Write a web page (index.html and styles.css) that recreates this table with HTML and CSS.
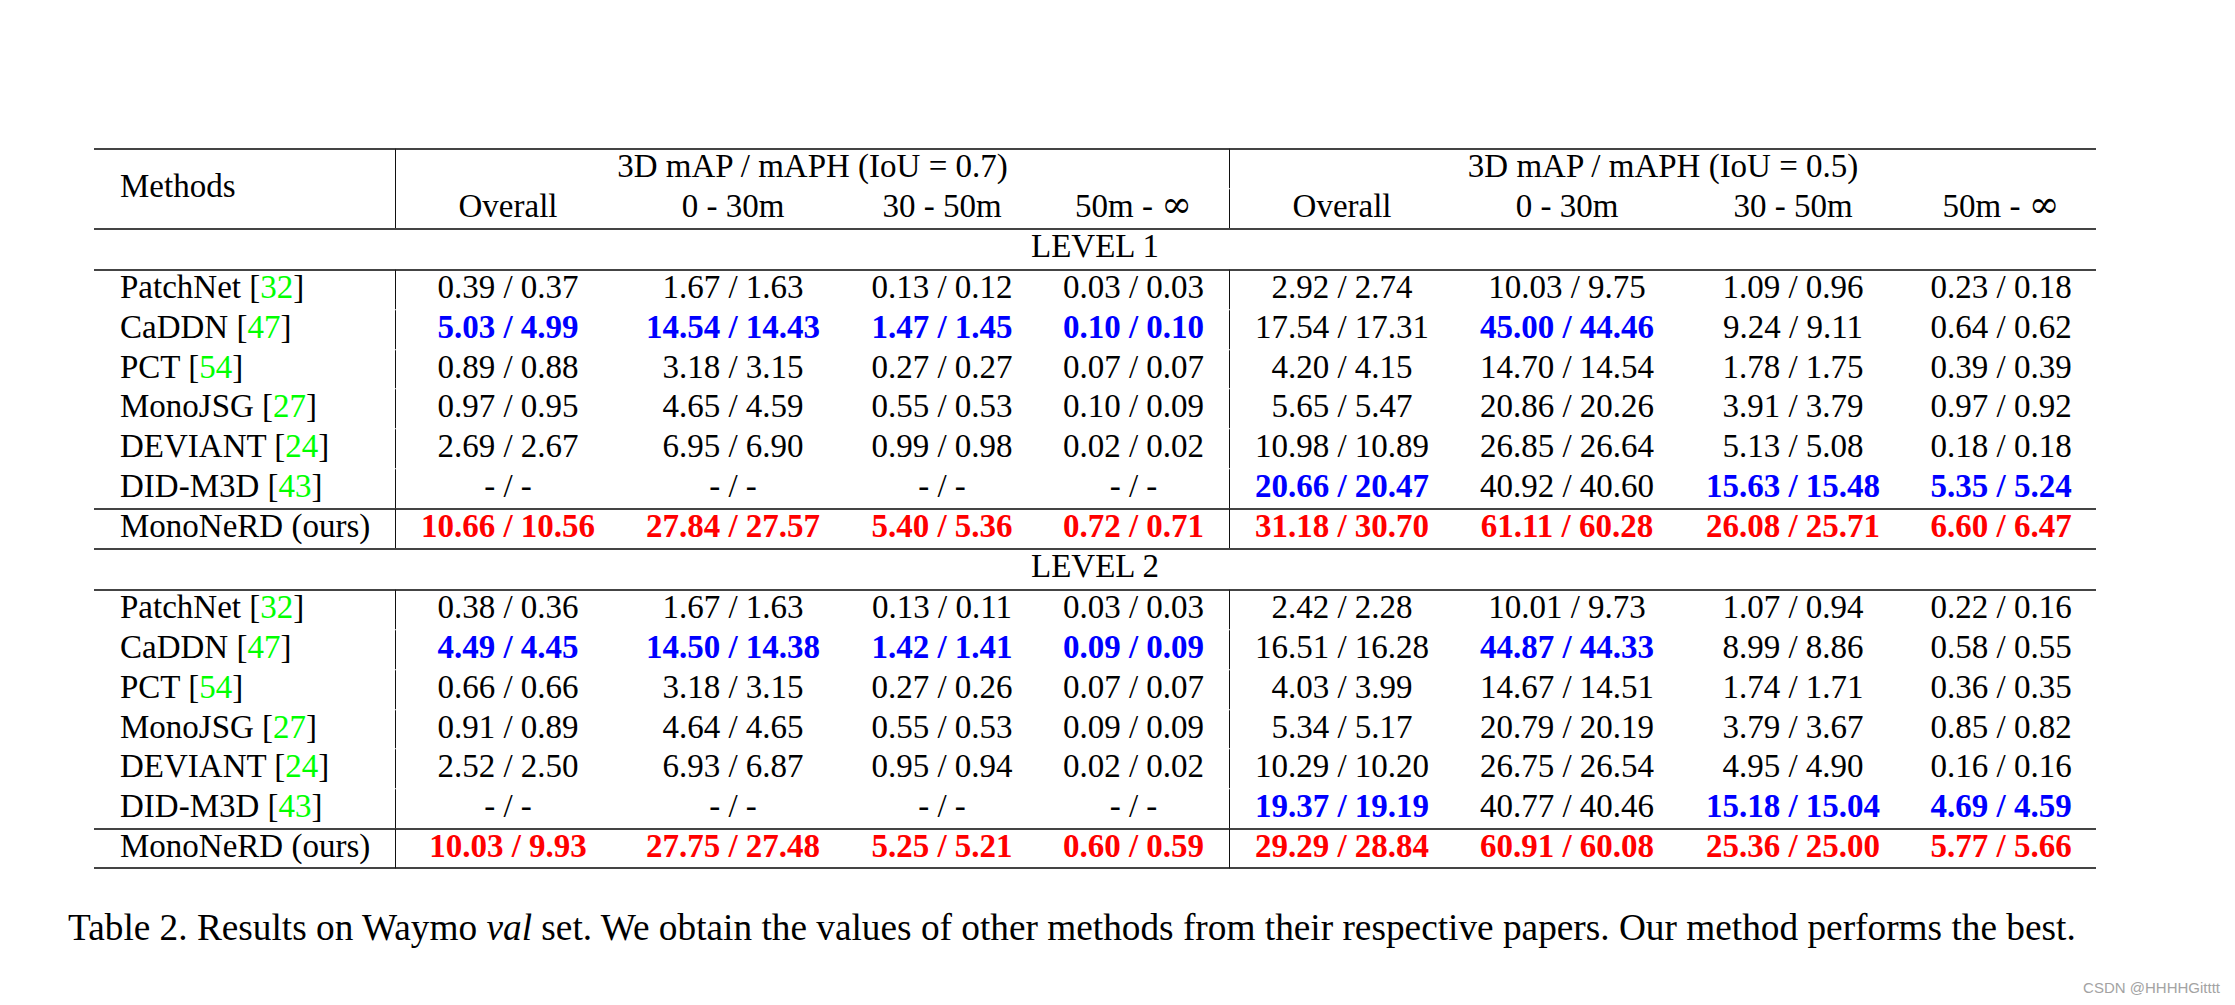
FILE: index.html
```html
<!DOCTYPE html>
<html lang="en">
<head>
<meta charset="utf-8">
<title>Table 2. Results on Waymo val set</title>
<link rel="stylesheet" href="styles.css">
</head>
<body>
<main class="page">
  <table class="results">
    <colgroup>
      <col class="c-m"><col class="c-a"><col class="c-b"><col class="c-c"><col class="c-c">
      <col class="c-a"><col class="c-b"><col class="c-b"><col class="c-d">
    </colgroup>
    <thead>
      <tr class="rule">
        <th rowspan="2" class="m sep">Methods</th>
        <th colspan="4" class="sep">3D mAP / mAPH (IoU = 0.7)</th>
        <th colspan="4">3D mAP / mAPH (IoU = 0.5)</th>
      </tr>
      <tr>
        <th>Overall</th><th>0 - 30m</th><th>30 - 50m</th><th class="sep">50m - <span class="inf">∞</span></th>
        <th>Overall</th><th>0 - 30m</th><th>30 - 50m</th><th>50m - <span class="inf">∞</span></th>
      </tr>
    </thead>
    <tbody>
      <tr class="rule level"><td colspan="9">LEVEL 1</td></tr>
      <tr class="rule data">
        <td class="m sep">PatchNet [<span class="cite">32</span>]</td>
        <td>0.39 / 0.37</td><td>1.67 / 1.63</td><td>0.13 / 0.12</td><td class="sep">0.03 / 0.03</td>
        <td>2.92 / 2.74</td><td>10.03 / 9.75</td><td>1.09 / 0.96</td><td>0.23 / 0.18</td>
      </tr>
      <tr class="data">
        <td class="m sep">CaDDN [<span class="cite">47</span>]</td>
        <td class="b">5.03 / 4.99</td><td class="b">14.54 / 14.43</td><td class="b">1.47 / 1.45</td><td class="b sep">0.10 / 0.10</td>
        <td>17.54 / 17.31</td><td class="b">45.00 / 44.46</td><td>9.24 / 9.11</td><td>0.64 / 0.62</td>
      </tr>
      <tr class="data">
        <td class="m sep">PCT [<span class="cite">54</span>]</td>
        <td>0.89 / 0.88</td><td>3.18 / 3.15</td><td>0.27 / 0.27</td><td class="sep">0.07 / 0.07</td>
        <td>4.20 / 4.15</td><td>14.70 / 14.54</td><td>1.78 / 1.75</td><td>0.39 / 0.39</td>
      </tr>
      <tr class="data">
        <td class="m sep">MonoJSG [<span class="cite">27</span>]</td>
        <td>0.97 / 0.95</td><td>4.65 / 4.59</td><td>0.55 / 0.53</td><td class="sep">0.10 / 0.09</td>
        <td>5.65 / 5.47</td><td>20.86 / 20.26</td><td>3.91 / 3.79</td><td>0.97 / 0.92</td>
      </tr>
      <tr class="data">
        <td class="m sep">DEVIANT [<span class="cite">24</span>]</td>
        <td>2.69 / 2.67</td><td>6.95 / 6.90</td><td>0.99 / 0.98</td><td class="sep">0.02 / 0.02</td>
        <td>10.98 / 10.89</td><td>26.85 / 26.64</td><td>5.13 / 5.08</td><td>0.18 / 0.18</td>
      </tr>
      <tr class="data">
        <td class="m sep">DID-M3D [<span class="cite">43</span>]</td>
        <td>- / -</td><td>- / -</td><td>- / -</td><td class="sep">- / -</td>
        <td class="b">20.66 / 20.47</td><td>40.92 / 40.60</td><td class="b">15.63 / 15.48</td><td class="b">5.35 / 5.24</td>
      </tr>
      <tr class="rule ours ours-1">
        <td class="m sep">MonoNeRD (ours)</td>
        <td class="r">10.66 / 10.56</td><td class="r">27.84 / 27.57</td><td class="r">5.40 / 5.36</td><td class="r sep">0.72 / 0.71</td>
        <td class="r">31.18 / 30.70</td><td class="r">61.11 / 60.28</td><td class="r">26.08 / 25.71</td><td class="r">6.60 / 6.47</td>
      </tr>
      <tr class="rule level"><td colspan="9">LEVEL 2</td></tr>
      <tr class="rule data">
        <td class="m sep">PatchNet [<span class="cite">32</span>]</td>
        <td>0.38 / 0.36</td><td>1.67 / 1.63</td><td>0.13 / 0.11</td><td class="sep">0.03 / 0.03</td>
        <td>2.42 / 2.28</td><td>10.01 / 9.73</td><td>1.07 / 0.94</td><td>0.22 / 0.16</td>
      </tr>
      <tr class="data">
        <td class="m sep">CaDDN [<span class="cite">47</span>]</td>
        <td class="b">4.49 / 4.45</td><td class="b">14.50 / 14.38</td><td class="b">1.42 / 1.41</td><td class="b sep">0.09 / 0.09</td>
        <td>16.51 / 16.28</td><td class="b">44.87 / 44.33</td><td>8.99 / 8.86</td><td>0.58 / 0.55</td>
      </tr>
      <tr class="data">
        <td class="m sep">PCT [<span class="cite">54</span>]</td>
        <td>0.66 / 0.66</td><td>3.18 / 3.15</td><td>0.27 / 0.26</td><td class="sep">0.07 / 0.07</td>
        <td>4.03 / 3.99</td><td>14.67 / 14.51</td><td>1.74 / 1.71</td><td>0.36 / 0.35</td>
      </tr>
      <tr class="data">
        <td class="m sep">MonoJSG [<span class="cite">27</span>]</td>
        <td>0.91 / 0.89</td><td>4.64 / 4.65</td><td>0.55 / 0.53</td><td class="sep">0.09 / 0.09</td>
        <td>5.34 / 5.17</td><td>20.79 / 20.19</td><td>3.79 / 3.67</td><td>0.85 / 0.82</td>
      </tr>
      <tr class="data">
        <td class="m sep">DEVIANT [<span class="cite">24</span>]</td>
        <td>2.52 / 2.50</td><td>6.93 / 6.87</td><td>0.95 / 0.94</td><td class="sep">0.02 / 0.02</td>
        <td>10.29 / 10.20</td><td>26.75 / 26.54</td><td>4.95 / 4.90</td><td>0.16 / 0.16</td>
      </tr>
      <tr class="data">
        <td class="m sep">DID-M3D [<span class="cite">43</span>]</td>
        <td>- / -</td><td>- / -</td><td>- / -</td><td class="sep">- / -</td>
        <td class="b">19.37 / 19.19</td><td>40.77 / 40.46</td><td class="b">15.18 / 15.04</td><td class="b">4.69 / 4.59</td>
      </tr>
      <tr class="rule ours ours-2">
        <td class="m sep">MonoNeRD (ours)</td>
        <td class="r">10.03 / 9.93</td><td class="r">27.75 / 27.48</td><td class="r">5.25 / 5.21</td><td class="r sep">0.60 / 0.59</td>
        <td class="r">29.29 / 28.84</td><td class="r">60.91 / 60.08</td><td class="r">25.36 / 25.00</td><td class="r">5.77 / 5.66</td>
      </tr>
    </tbody>
  </table>
  <p class="caption">Table 2. Results on Waymo <i>val</i> set. We obtain the values of other methods from their respective papers. Our method performs the best.</p>
  <footer class="mark">CSDN @HHHHGitttt</footer>
</main>
</body>
</html>
```

FILE: styles.css
```css
html, body {
  margin: 0;
  padding: 0;
  background: #ffffff;
}

.page {
  width: 2235px;
  height: 1005px;
  padding-top: 148px;
  box-sizing: border-box;
  font-family: "Liberation Serif", "Times New Roman", serif;
  color: #000;
  overflow: hidden;
}

.results {
  margin-left: 94px;
  width: 2002px;
  table-layout: fixed;
  border-collapse: separate;
  border-spacing: 0;
  font-size: 33px;
}

.c-m { width: 302px; }
.c-a { width: 224px; }
.c-b { width: 226px; }
.c-c { width: 192px; }
.c-d { width: 190px; }

.results th,
.results td {
  padding: 0 0 5px 0;
  line-height: 33px;
  font-weight: normal;
  text-align: center;
  white-space: nowrap;
  vertical-align: top;
  border-top: 2px solid transparent;
}

.results tr.rule > th,
.results tr.rule > td {
  border-top-color: #444;
}

.results .m {
  text-align: left;
  padding-left: 26px;
}

.results th.m {
  vertical-align: middle;
}

.results .sep {
  border-right: 1px solid #111;
}

.results .inf {
  font-family: "DejaVu Serif", serif;
  font-size: 1.12em;
  line-height: 0;
}

.results tr.data > td { padding-bottom: 4.8px; }
.results tr.level > td { padding-bottom: 6px; }
.results tr.ours-1 > td { padding-bottom: 5.5px; }
.results tr.ours-2 > td {
  padding-bottom: 4px;
  border-bottom: 2px solid #444;
}

.results .cite { color: #00ff00; }
.results .b { color: #0000ff; font-weight: bold; }
.results .r { color: #ff0000; font-weight: bold; }

.caption {
  margin: 37.5px 0 0 68px;
  font-size: 37.3px;
  line-height: 42px;
  white-space: nowrap;
}

.mark {
  display: flex;
  justify-content: flex-end;
  margin-top: 30px;
  padding-right: 15px;
  font-family: "Liberation Sans", Arial, sans-serif;
  font-size: 15px;
  line-height: 17px;
  color: #a3a3a3;
}
```
